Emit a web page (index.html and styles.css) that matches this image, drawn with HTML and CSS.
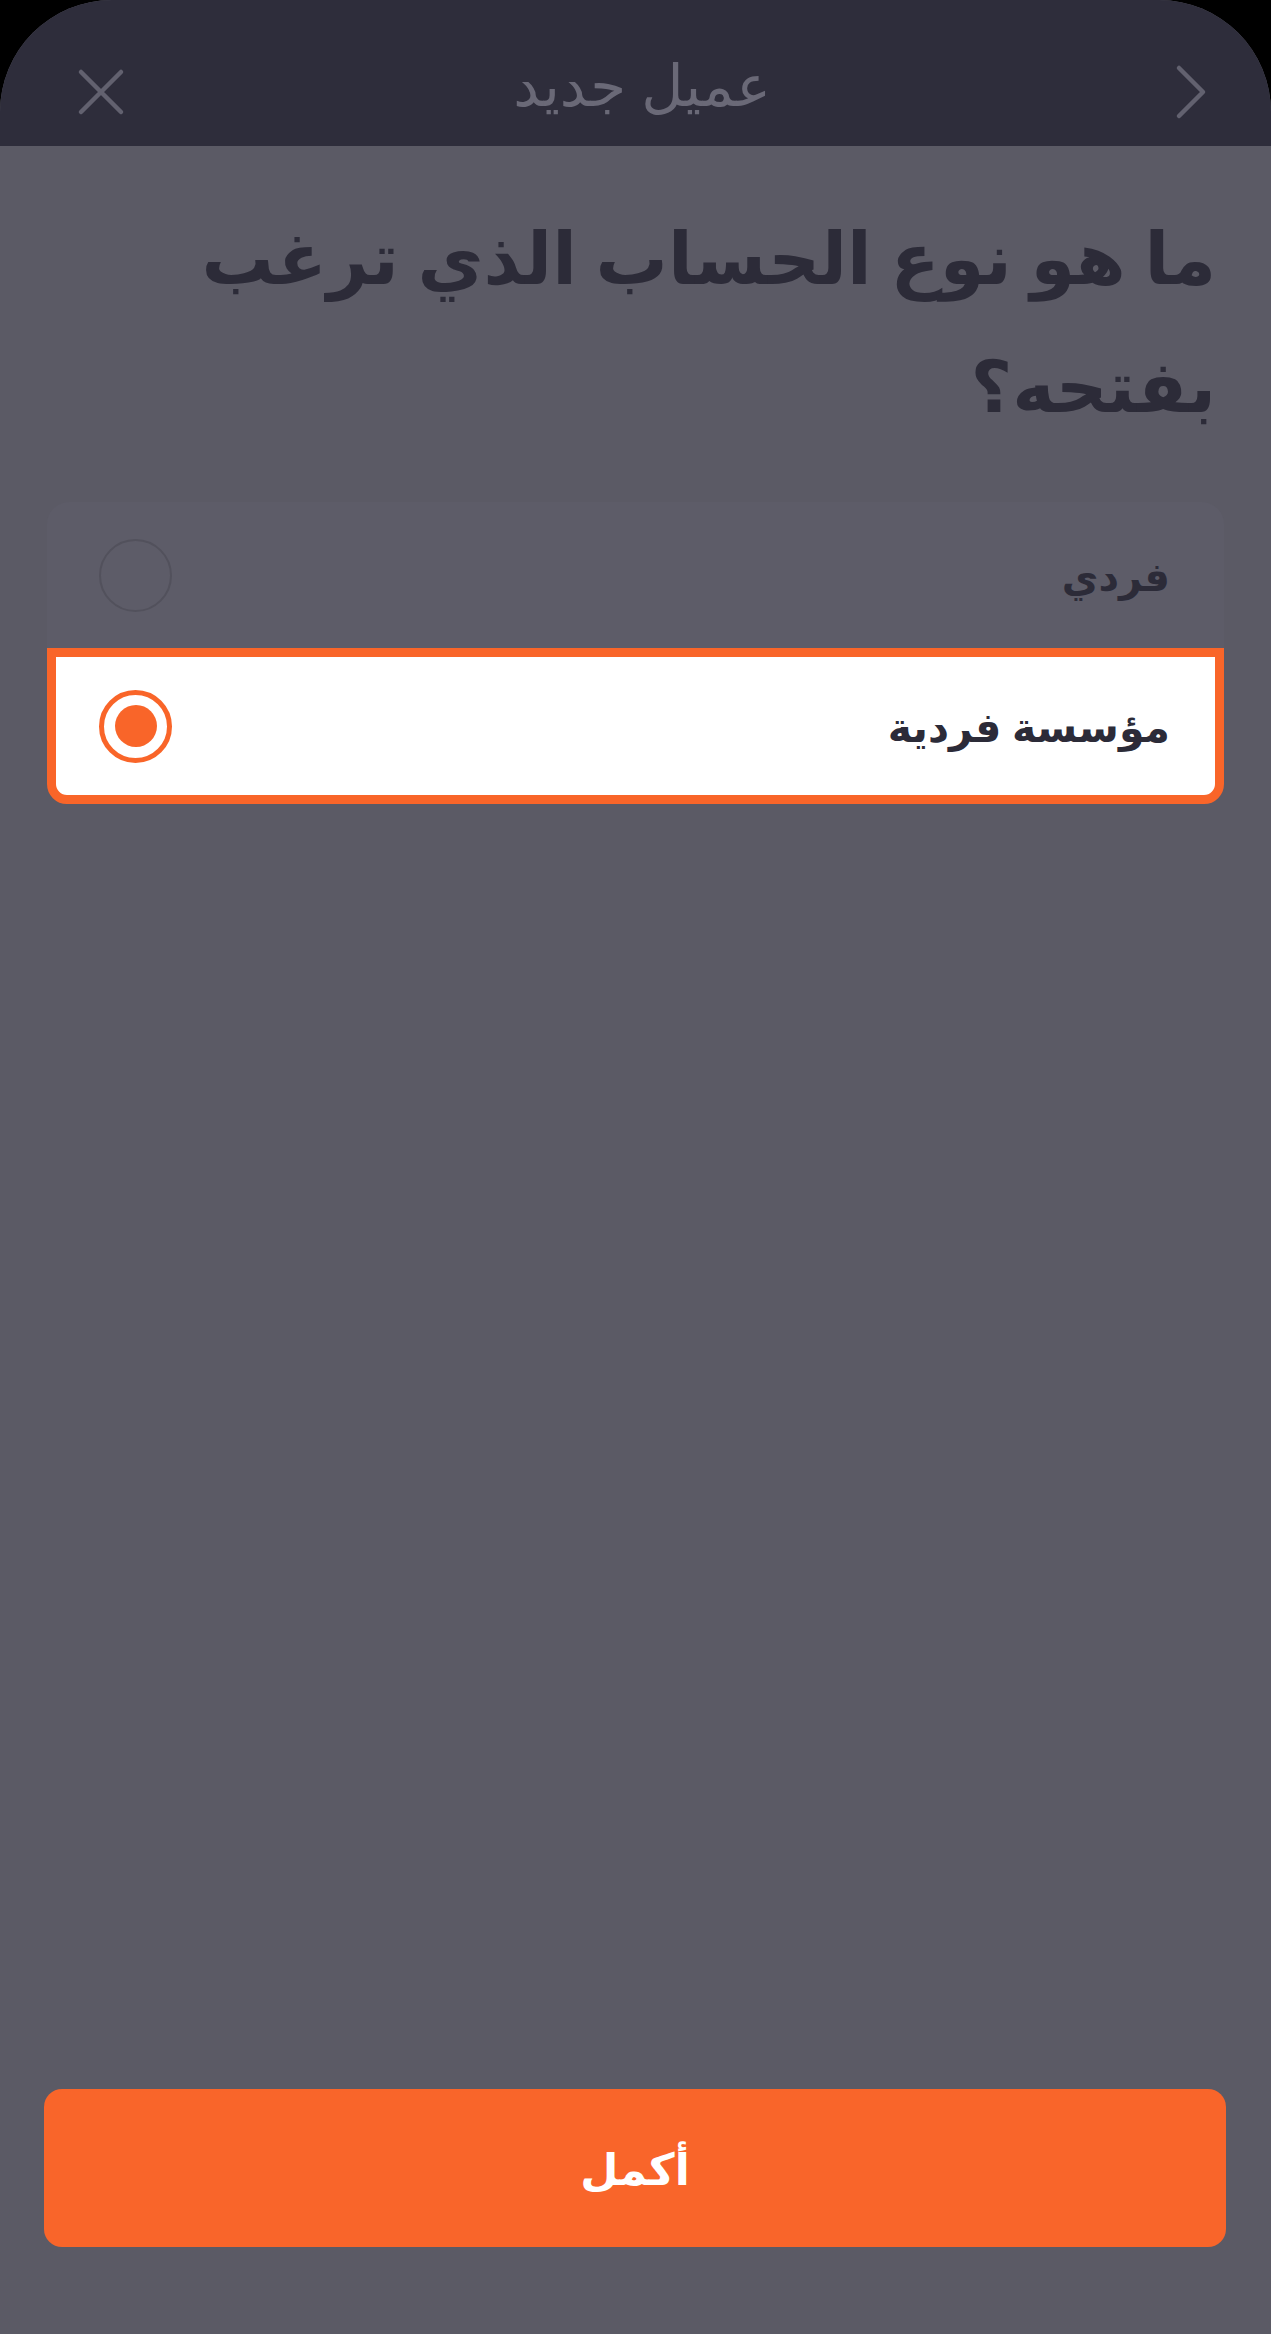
FILE: index.html
```html
<!DOCTYPE html>
<html lang="ar" dir="rtl">
<head>
<meta charset="utf-8">
<title>عميل جديد</title>
<link rel="stylesheet" href="styles.css">
</head>
<body>
<div class="screen">
  <header class="topbar">
    <button class="icon-btn back" aria-label="رجوع">
      <svg width="32" height="56" viewBox="0 0 32 56"><polyline points="4,4 28,28 4,52" fill="none" stroke="currentColor" stroke-width="4.5" stroke-linecap="round" stroke-linejoin="round"/></svg>
    </button>
    <h1 class="title">عميل جديد</h1>
    <button class="icon-btn close" aria-label="إغلاق">
      <svg width="48" height="48" viewBox="0 0 48 48"><path d="M4 4 L44 44 M44 4 L4 44" fill="none" stroke="currentColor" stroke-width="4.5" stroke-linecap="round"/></svg>
    </button>
  </header>

  <main class="content">
    <h2 class="question">ما هو نوع الحساب الذي ترغب بفتحه؟</h2>

    <div class="options">
      <label class="option">
        <span class="option-label">فردي</span>
        <span class="radio"></span>
      </label>
      <label class="option selected">
        <span class="option-label">مؤسسة فردية</span>
        <span class="radio"><span class="dot"></span></span>
      </label>
    </div>

    <div class="spacer"></div>

    <button class="primary">أكمل</button>
  </main>
</div>
</body>
</html>
```

FILE: styles.css
```css
* { box-sizing: border-box; }

html, body {
  margin: 0;
  padding: 0;
  background: #000;
}

body {
  font-family: "Noto Sans", "DejaVu Sans", sans-serif;
}

.screen {
  width: 1271px;
  height: 2334px;
  background: #5b5a65;
  border-radius: 112px 112px 0 0;
  overflow: hidden;
  display: flex;
  flex-direction: column;
}

.topbar {
  height: 146px;
  flex: none;
  background: #2e2d3b;
  display: grid;
  grid-template-columns: 1fr auto 1fr;
  align-items: center;
  padding: 38px 64px 0 77px;
}

.icon-btn {
  background: none;
  border: 0;
  padding: 0;
  margin: 0;
  color: #62616f;
  display: flex;
  line-height: 0;
}

.icon-btn.back { justify-self: start; }
.icon-btn.close { justify-self: end; }

.title {
  margin: 0 0 16px 0;
  font-size: 58px;
  font-weight: 400;
  color: #6a6977;
  line-height: 1;
}

.content {
  flex: 1;
  display: flex;
  flex-direction: column;
  padding: 0 45px 87px 44px;
}

.question {
  margin: 46px 10px 0 0;
  font-size: 72px;
  font-weight: 700;
  line-height: 128px;
  color: #2c2b38;
  padding-left: 140px;
}

.options {
  margin: 54px 2px 0 3px;
  display: flex;
  flex-direction: column;
}

.option {
  height: 146px;
  display: flex;
  align-items: center;
  justify-content: space-between;
  padding: 0 54px 0 52px;
  background: #5d5c68;
  border-radius: 22px 22px 0 0;
}

.option.selected {
  height: 156px;
  background: #ffffff;
  border: 9px solid #f96529;
  border-radius: 0 0 20px 20px;
  padding: 0 45px 0 43px;
}

.option-label {
  font-size: 40px;
  font-weight: 700;
  color: #2c2b38;
}

.selected .option-label {
  font-size: 41px;
}

.radio {
  width: 73px;
  height: 73px;
  border-radius: 50%;
  border: 2px solid #52515c;
  display: flex;
  align-items: center;
  justify-content: center;
}

.selected .radio {
  border: 5px solid #f96529;
}

.dot {
  width: 42px;
  height: 42px;
  border-radius: 50%;
  background: #f96529;
}

.spacer { flex: 1; }

.primary {
  height: 158px;
  width: 100%;
  border: 0;
  border-radius: 18px;
  background: #f9652a;
  color: #ffffff;
  font-family: inherit;
  font-size: 44px;
  font-weight: 700;
}
```
